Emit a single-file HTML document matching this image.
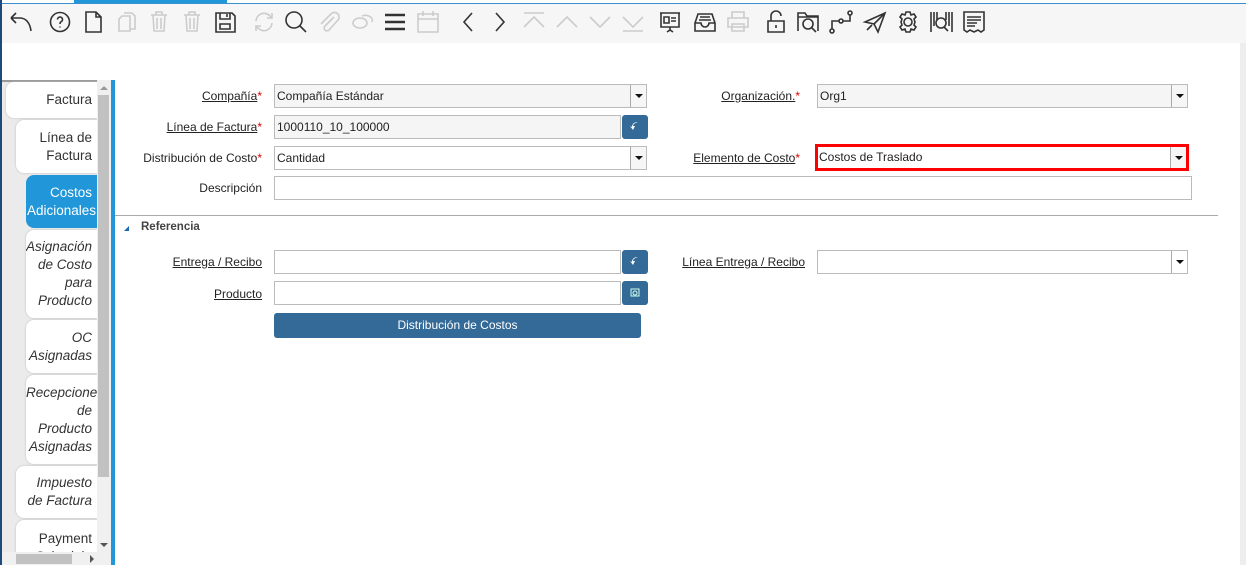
<!DOCTYPE html>
<html><head><meta charset="utf-8"><style>
*{box-sizing:border-box;margin:0;padding:0}
body{width:1246px;height:565px;overflow:hidden;background:#fff;font-family:"Liberation Sans",sans-serif;font-size:12px;color:#333;position:relative}
.abs{position:absolute}
.tb{left:0;top:4px;width:1246px;height:39px;background:#f6f6f6}
.ic{position:absolute;top:9px;width:26px;height:26px}
.ic svg{width:26px;height:26px;fill:none;stroke:#333;stroke-width:1.6}
.ic.d svg{stroke:#ccc}
.tab{position:absolute;background:#fff;border-radius:8px 0 0 8px;box-shadow:0 0 2px #bbb;text-align:right;padding-right:5px;font-size:13.5px;color:#333;line-height:18px;display:flex;flex-direction:column;justify-content:center;overflow:hidden;white-space:nowrap}
.tab i{font-style:italic}
.lab{position:absolute;text-align:right;font-size:12px;color:#222;width:250px}
.lab u{text-decoration:underline}
.lab s{text-decoration:none;color:#d00}
.in{position:absolute;height:24px;border:1px solid #bbb;background:#fff;font-size:12px;padding:4px 2px;color:#222}
.in.g{background:#f5f5f5}
.dd{position:absolute;right:0;top:0;width:16px;height:22px;border-left:1px solid #aaa;background:#f6f6f6}
.dd:after{content:"";position:absolute;left:4px;top:9px;border:4px solid transparent;border-top:4px solid #111}
.bb{position:absolute;width:26px;height:24px;background:#336a98;border-radius:3px}
</style></head><body>
<div class="abs" style="left:0;top:0;width:1246px;height:4px;background:#fff;border-bottom:1px solid #3a8fd0"></div>
<div class="abs" style="left:74px;top:0;width:153px;height:3px;background:#2196d8"></div>
<div class="abs tb"></div>
<div class="abs" style="left:0;top:0;width:2px;height:565px;background:#1d4a78"></div>

<div class="ic" style="left:8px"><svg viewBox="0 0 26 26"><path d="M3 9l5-5M3 9l5 5M3 9h9c6 0 10 5 11 13"/></svg></div>
<div class="ic" style="left:47px"><svg viewBox="0 0 26 26"><circle cx="13" cy="13" r="9.5"/><path d="M10.5 10.5a2.5 2.5 0 1 1 3.5 2.3c-1 .5-1 1-1 2.2M13 17.5v1"/></svg></div>
<div class="ic" style="left:80px"><svg viewBox="0 0 26 26"><path d="M6 3h10l5 5v15H6zM16 3v5h5"/></svg></div>
<div class="ic d" style="left:113px"><svg viewBox="0 0 26 26"><path d="M9 7h8v15H6V10zM11 4h8l3 3v13h-5"/></svg></div>
<div class="ic d" style="left:146px"><svg viewBox="0 0 26 26"><path d="M5 6h16M10 6V3h6v3M7 6l1 16h10l1-16M11 9v11M15 9v11"/></svg></div>
<div class="ic d" style="left:179px"><svg viewBox="0 0 26 26"><path d="M5 6h16M10 6V3h6v3M7 6l1 16h10l1-16M11 9v11M15 9v11"/></svg></div>
<div class="ic" style="left:212px"><svg viewBox="0 0 26 26"><path d="M4 4h16l3 3v16H4zM8 4v6h10V4M15 5v3M8 15h10v5H8z"/></svg></div>
<div class="ic d" style="left:251px"><svg viewBox="0 0 26 26"><path d="M5 12a8 8 0 0 1 14-5l2 2M21 14a8 8 0 0 1-14 5l-2-2M21 4v5h-5M5 22v-5h5"/></svg></div>
<div class="ic" style="left:283px"><svg viewBox="0 0 26 26"><circle cx="11" cy="11" r="8"/><path d="M17 17l6 6"/></svg></div>
<div class="ic d" style="left:316px"><svg viewBox="0 0 26 26"><path d="M18 8l-9 9a2.5 2.5 0 0 0 4 4l9-10a4.5 4.5 0 0 0-7-6L5 15"/></svg></div>
<div class="ic d" style="left:349px"><svg viewBox="0 0 26 26"><ellipse cx="11" cy="14" rx="7" ry="5"/><path d="M13 7a7 5 0 0 1 10 6"/></svg></div>
<div class="ic" style="left:382px"><svg viewBox="0 0 26 26" style="stroke-width:2.4"><path d="M3 6h20M3 13h20M3 20h20"/></svg></div>
<div class="ic d" style="left:415px"><svg viewBox="0 0 26 26"><path d="M3 5h20v18H3zM3 10h20M8 2v5M18 2v5"/></svg></div>
<div class="ic" style="left:455px"><svg viewBox="0 0 26 26"><path d="M17 4l-8 9 8 9"/></svg></div>
<div class="ic" style="left:487px"><svg viewBox="0 0 26 26"><path d="M9 4l8 9-8 9"/></svg></div>
<div class="ic d" style="left:521px"><svg viewBox="0 0 26 26"><path d="M3 4h20M3 18l10-10 10 10"/></svg></div>
<div class="ic d" style="left:554px"><svg viewBox="0 0 26 26"><path d="M3 18l10-10 10 10"/></svg></div>
<div class="ic d" style="left:587px"><svg viewBox="0 0 26 26"><path d="M3 8l10 10 10-10"/></svg></div>
<div class="ic d" style="left:620px"><svg viewBox="0 0 26 26"><path d="M3 22h20M3 8l10 10 10-10"/></svg></div>
<div class="ic" style="left:657px"><svg viewBox="0 0 26 26"><path d="M3 4h20M4 4v14h18V4M13 18v3M10 23l3-2 3 2M7 8h5v6H7zM14 9h5M14 12h5"/></svg></div>
<div class="ic" style="left:692px"><svg viewBox="0 0 26 26"><path d="M3 14l3-9h14l3 9v8H3zM3 14h6a4 4 0 0 0 8 0h6M8 8h10M7 11h12"/></svg></div>
<div class="ic d" style="left:725px"><svg viewBox="0 0 26 26"><path d="M7 9V3h12v6M3 9h20v9H3zM7 15h12v7H7z"/></svg></div>
<div class="ic" style="left:763px"><svg viewBox="0 0 26 26"><path d="M5 12h16v11H5zM8 12V7a5 5 0 0 1 10 0M13 16v3"/></svg></div>
<div class="ic" style="left:795px"><svg viewBox="0 0 26 26"><path d="M3 22V4h7l2 3h11v15M3 8h20"/><circle cx="13" cy="15" r="5"/><path d="M17 19l4 4"/></svg></div>
<div class="ic" style="left:828px"><svg viewBox="0 0 26 26"><circle cx="4" cy="22" r="2"/><circle cx="13" cy="12" r="2"/><circle cx="22" cy="4" r="2"/><path d="M4 20v-8h7M15 12h7V6"/></svg></div>
<div class="ic" style="left:862px"><svg viewBox="0 0 26 26"><path d="M3 13L23 4l-7 19-4-8zM12 15l11-11M5 21l5-5"/></svg></div>
<div class="ic" style="left:895px"><svg viewBox="0 0 26 26"><circle cx="13" cy="13" r="4"/><path d="M11 3h4l1 3 3-1 2 3-2 2 1 3-1 3 2 2-2 3-3-1-1 3h-4l-1-3-3 1-2-3 2-2-1-3 1-3-2-2 2-3 3 1z"/></svg></div>
<div class="ic" style="left:928px"><svg viewBox="0 0 26 26"><path d="M3 3v20M6 3v14M9 3v8M18 3v8M21 3v14M24 3v20"/><circle cx="13" cy="14" r="5"/><path d="M16 18l4 4"/></svg></div>
<div class="ic" style="left:961px"><svg viewBox="0 0 26 26"><path d="M3 3h20v18l-3 2-3-2-4 2-4-2-3 2-3-2zM6 8h14M6 11h14M6 14h10M6 17h8"/></svg></div>

<!-- left panel -->
<div class="abs" style="left:2px;top:80px;width:95px;height:485px;background:#ebebeb;border-top:2px solid #999"></div>
<div class="tab" style="left:6px;top:82px;width:91px;height:36px">Factura</div>
<div class="tab" style="left:16px;top:120px;width:81px;height:53px">Línea de<br>Factura</div>
<div class="tab" style="left:26px;top:175px;width:71px;height:53px;background:#2196d8;color:#fff;box-shadow:none;padding-right:0;align-items:flex-start;padding-left:1px"><span style="padding-left:23px">Costos</span>Adicionales</div>
<div class="tab" style="left:26px;top:230px;width:71px;height:88px"><i>Asignación</i><i>de Costo</i><i>para</i><i>Producto</i></div>
<div class="tab" style="left:26px;top:320px;width:71px;height:53px"><i>OC</i><i>Asignadas</i></div>
<div class="tab" style="left:26px;top:375px;width:71px;height:89px;align-items:flex-end"><i style="margin-right:-12px">Recepciones</i><i>de</i><i>Producto</i><i>Asignadas</i></div>
<div class="tab" style="left:16px;top:466px;width:81px;height:52px"><i>Impuesto</i><i>de Factura</i></div>
<div class="tab" style="left:16px;top:520px;width:81px;height:40px;justify-content:flex-start;padding-top:10px">Payment<br>Schedule</div>
<div class="abs" style="left:97px;top:80px;width:14px;height:472px;background:#f0f0f0"></div>
<div class="abs" style="left:98px;top:95px;width:11px;height:382px;background:#c1c1c1"></div>
<div class="abs" style="left:100px;top:86px;border:4px solid transparent;border-bottom:4px solid #999;border-top:none"></div>
<div class="abs" style="left:100px;top:543px;border:4px solid transparent;border-top:4px solid #555;border-bottom:none"></div>
<div class="abs" style="left:2px;top:552px;width:109px;height:13px;background:#f0f0f0"></div>
<div class="abs" style="left:16px;top:554px;width:56px;height:10px;background:#c1c1c1"></div>
<div class="abs" style="left:90px;top:555px;border:4px solid transparent;border-left:4px solid #555;border-right:none"></div>
<div class="abs" style="left:111px;top:80px;width:4px;height:485px;background:#2196d8"></div>
<div class="abs" style="left:1240px;top:43px;width:6px;height:522px;background:#eee"></div>

<!-- form -->
<div class="lab" style="left:12px;top:89px"><u>Compañía</u><s>*</s></div>
<div class="in g" style="left:274px;top:84px;width:373px">Compañía Estándar<div class="dd"></div></div>
<div class="lab" style="left:550px;top:89px"><u>Organización.</u><s>*</s></div>
<div class="in g" style="left:817px;top:84px;width:371px">Org1<div class="dd"></div></div>

<div class="lab" style="left:12px;top:120px"><u>Línea de Factura</u><s>*</s></div>
<div class="in g" style="left:274px;top:115px;width:347px">1000110_10_100000</div>
<div class="bb" style="left:622px;top:115px"><svg width="26" height="24" viewBox="0 0 26 24"><path d="M16 7c-4 0-6 2-6 5l-2-1 3 4 2-4h-2c0-2 2-3 5-4z" fill="#fff"/></svg></div>

<div class="lab" style="left:12px;top:151px">Distribución de Costo<s>*</s></div>
<div class="in" style="left:274px;top:146px;width:373px">Cantidad<div class="dd"></div></div>
<div class="lab" style="left:550px;top:151px"><u>Elemento de Costo</u><s>*</s></div>
<div class="in" style="left:815px;top:144px;width:374px;height:27px;border:3px solid #f00;padding:3px 1px">Costos de Traslado<div class="dd" style="height:21px"></div></div>

<div class="lab" style="left:12px;top:181px">Descripción</div>
<div class="in" style="left:274px;top:176px;width:918px"></div>

<div class="abs" style="left:115px;top:215px;width:1103px;height:1px;background:#aaa"></div>
<div class="abs" style="left:124px;top:226px;border-left:5px solid transparent;border-bottom:5px solid #1a66b8"></div>
<div class="abs" style="left:141px;top:221px;font-weight:bold;font-size:11.5px;color:#444">Referencia</div>

<div class="lab" style="left:12px;top:255px"><u>Entrega / Recibo</u></div>
<div class="in" style="left:274px;top:250px;width:347px"></div>
<div class="bb" style="left:622px;top:250px"><svg width="26" height="24" viewBox="0 0 26 24"><path d="M16 7c-4 0-6 2-6 5l-2-1 3 4 2-4h-2c0-2 2-3 5-4z" fill="#fff"/></svg></div>
<div class="lab" style="left:555px;top:255px"><u>Línea Entrega / Recibo</u></div>
<div class="in" style="left:817px;top:250px;width:371px"><div class="dd" style="background:#fff"></div></div>

<div class="lab" style="left:12px;top:287px"><u>Producto</u></div>
<div class="in" style="left:274px;top:281px;width:347px"></div>
<div class="bb" style="left:622px;top:281px"><svg width="26" height="24" viewBox="0 0 26 24" fill="none" stroke="#cfe" stroke-width="1"><rect x="9" y="8" width="8" height="7"/><circle cx="13" cy="12" r="2"/></svg></div>
<div class="abs" style="left:274px;top:313px;width:367px;height:25px;background:#336a98;border-radius:3px;color:#fff;text-align:center;line-height:25px;font-size:12px">Distribución de Costos</div>
</body></html>
